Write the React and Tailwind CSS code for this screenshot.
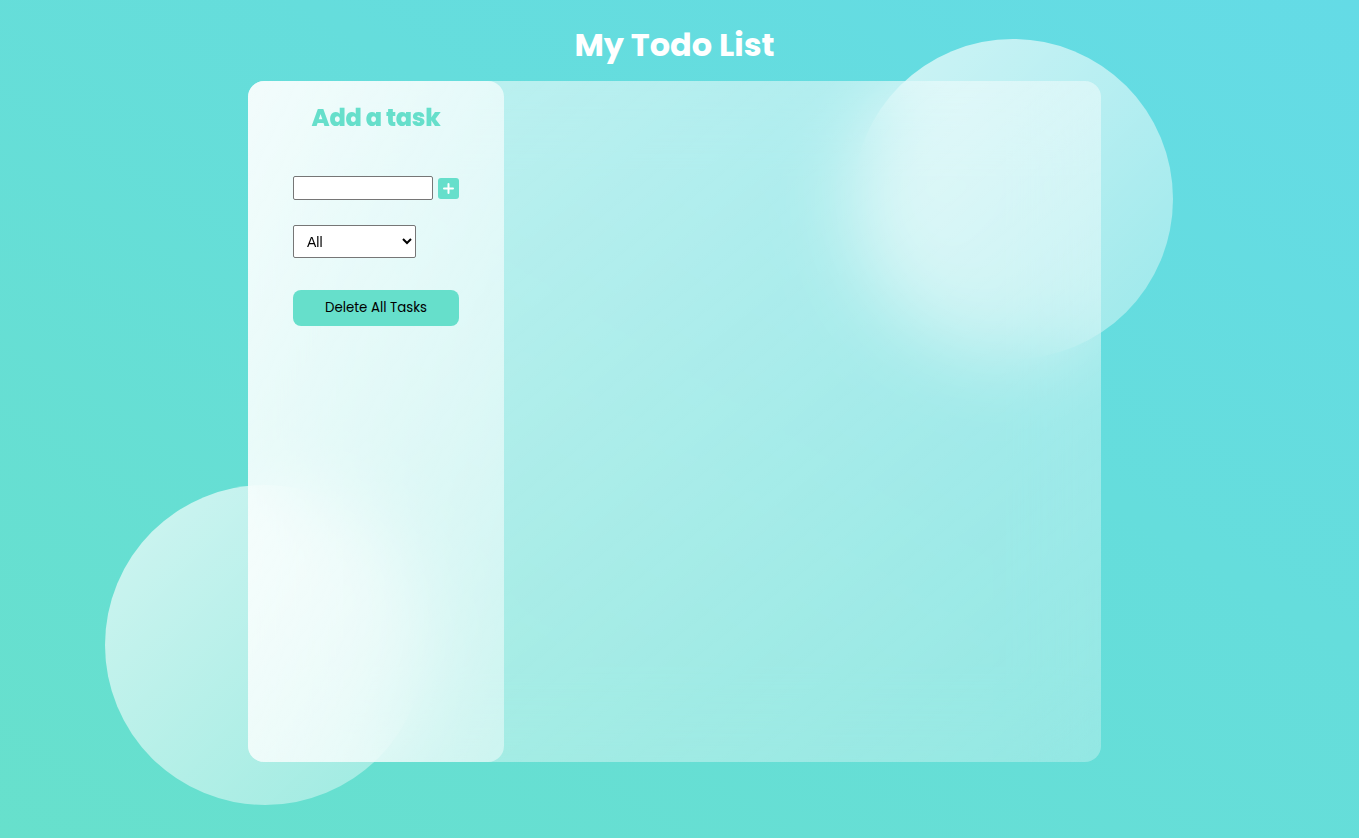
import React, { useState } from 'react'

const font = "font-['Poppins','Inter','Open_Sans',sans-serif]"

function Sidebar() {
  const [task, setTask] = useState('')
  const [filter, setFilter] = useState('all')

  return (
    <aside className="w-[256px] h-full rounded-2xl bg-linear-to-br from-white/80 to-white/45">
      <h2 className="pt-[19px] text-center text-[24px] leading-[36px] font-extrabold text-[#66dfcb] tracking-[-0.3px]">
        Add a task
      </h2>
      <div className="w-[166px] mx-auto mt-[40px]">
        <div className="flex items-center">
          <input
            value={task}
            onChange={(e) => setTask(e.target.value)}
            className="w-[140px] h-[24px] bg-white border border-[#767676] rounded-[2px] px-1 text-[13px] outline-none"
          />
          <button className="ml-[5px] w-[21px] h-[21px] rounded-[3px] bg-[#66dfcb] text-white flex items-center justify-center">
            <svg width="11" height="11" viewBox="0 0 11 11">
              <path d="M5.5 1v9M1 5.5h9" stroke="white" strokeWidth="2" strokeLinecap="round" />
            </svg>
          </button>
        </div>
        <select
          value={filter}
          onChange={(e) => setFilter(e.target.value)}
          className="mt-[25px] w-[123px] h-[33px] bg-white border border-[#767676] rounded-[2px] pl-[9px] text-[14px] text-black font-['Liberation_Sans',Arial,sans-serif]"
        >
          <option value="all">All</option>
          <option value="done">Completed</option>
          <option value="todo">Uncompleted</option>
        </select>
        <button className="mt-[32px] w-[166px] h-[36px] rounded-lg bg-[#66dfcb] text-[13.33px] text-black">
          Delete All Tasks
        </button>
      </div>
    </aside>
  )
}

export default function App() {
  return (
    <div className={`relative min-h-[838px] h-screen overflow-hidden bg-linear-to-tr from-[#67e0cc] to-[#64dbe6] ${font}`}>
      {/* decorative circles */}
      <div className="absolute left-[853px] top-[39px] w-[320px] h-[320px] rounded-full bg-linear-to-br from-white/70 to-white/35" />
      <div className="absolute left-[105px] top-[485px] w-[320px] h-[320px] rounded-full bg-linear-to-br from-white/70 to-white/35" />

      <div className="relative flex flex-col items-center pt-[21px] pr-[10px]">
        <h1 className="text-[32px] leading-[48px] font-bold text-white">My Todo List</h1>
        <div className="mt-[12px] w-[853px] h-[681px] rounded-2xl bg-linear-to-br from-white/60 to-white/30 backdrop-blur-2xl flex">
          <Sidebar />
          <main className="flex-1" />
        </div>
      </div>
    </div>
  )
}
